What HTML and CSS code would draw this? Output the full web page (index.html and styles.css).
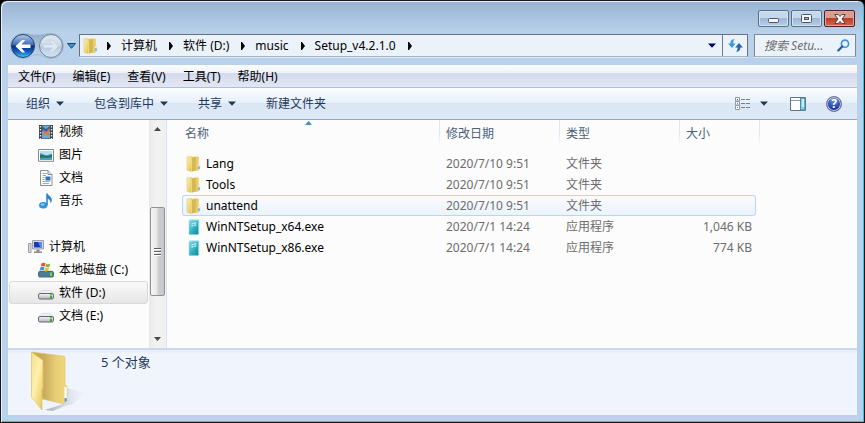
FILE: index.html
```html
<!DOCTYPE html>
<html lang="zh-CN">
<head>
<meta charset="utf-8">
<title>Setup_v4.2.1.0</title>
<link rel="stylesheet" href="styles.css">
</head>
<body>
<svg class="defs" aria-hidden="true">
  <defs>
    <linearGradient id="gFold" x1="0" x2="1" y1="0" y2="1">
      <stop offset="0" stop-color="#fbf0ae"/><stop offset=".5" stop-color="#f1dd80"/><stop offset="1" stop-color="#dfbc48"/>
    </linearGradient>
    <linearGradient id="gBack" x1="0" x2="1" y1="0" y2="0">
      <stop offset="0" stop-color="#f7e99c"/><stop offset=".45" stop-color="#d0ae48"/><stop offset="1" stop-color="#e9cd69"/>
    </linearGradient>
    <linearGradient id="gExe" x1="0" x2="1" y1="0" y2="1">
      <stop offset="0" stop-color="#7fdbe3"/><stop offset=".5" stop-color="#38b4c4"/><stop offset="1" stop-color="#0f8799"/>
    </linearGradient>
    <linearGradient id="gDrive" x1="0" x2="0" y1="0" y2="1">
      <stop offset="0" stop-color="#f6f6f8"/><stop offset="1" stop-color="#b4b6ba"/>
    </linearGradient>
    <symbol id="folder" viewBox="0 0 16 16">
      <path d="M5 1l7-.4.600.6v13.200L6 15z" fill="#e6ca68"/>
      <path d="M1 .8 5.600.600V14.800L5 15.400 1 14.200z" fill="url(#gFold)" stroke="#dcc26c" stroke-width=".5"/>
      <path d="M5 2.500 9 .600V14.500L6 15.800 5 15z" fill="url(#gBack)"/>
      <path d="M9 .8h3.300v13.400L9 14.500z" fill="#e9cd69"/>
      <path d="M9 1v13.500" stroke="#bf9c3a" stroke-width=".7"/>
      <path d="M12 8h1.800v5.200L12 13.800z" fill="#fdfdf6" stroke="#dfc66e" stroke-width=".4"/>
      <path d="M12.200 10.300h1.500v2.600h-1.500z" fill="#58aee8"/>
    </symbol>
    <symbol id="exe" viewBox="0 0 16 16">
      <path d="M3 1.500 4 .8h9v13.400l-.8 1.200H3z" fill="#9be6ec" stroke="#8ad3db" stroke-width=".5"/>
      <path d="M3.200 1.600h9v13.700h-9z" fill="url(#gExe)"/>
      <path d="M5.600 4.200l2-.6v1.500l-2 .5zM8.200 3.500l2.200-.4v1.500l-2.200.4zM5.400 6.300l2-.4v1.400l-2 .5zM8 5.700l2.200-.4v1.400L8 7.100z" fill="#c4f1f5"/>
    </symbol>
    <symbol id="drive" viewBox="0 0 16 16">
      <path d="M3 6.600 5 5.400h6l2.400 1.200 2.100 2.600H.5z" fill="#eef0f3" stroke="#c3c6cb" stroke-width=".5"/>
      <rect x=".5" y="8.500" width="15" height="5.500" rx="1.600" fill="url(#gDrive)" stroke="#62656b"/>
      <path d="M12 9.300h2v4h-2z" fill="#2f9a1e"/><path d="M12 9.800h2v1.500h-2z" fill="#7aea45"/>
    </symbol>
    <symbol id="down" viewBox="0 0 8 5"><path d="M0 .5h8L4 4.700z" fill="currentColor"/></symbol>
    <symbol id="right" viewBox="0 0 4 8"><path d="M0 0h1l3 4-3 4H0z" fill="currentColor"/></symbol>
  </defs>
</svg>

<div class="window">
  <header class="titlebar">
    <button class="cap" aria-label="最小化"><svg class="low" width="11" height="5" viewBox="0 0 11 5"><rect x=".5" y=".5" width="10" height="4" rx="1" fill="#f5f5f5" stroke="#4d5566"/></svg></button>
    <button class="cap" aria-label="最大化"><svg width="11" height="9" viewBox="0 0 11 9"><rect x=".5" y=".5" width="10" height="8" rx="1" fill="#f5f5f5" stroke="#4d5566"/><rect x="3.500" y="3.500" width="4" height="2" fill="#8fb0d4" stroke="#4d5566"/></svg></button>
    <button class="cap close" aria-label="关闭"><svg width="12" height="10" viewBox="0 0 12 10"><path d="M.8.500h3.400L6 2.500 7.800.500h3.400L8 5l3.200 4.500H7.800L6 7.500 4.200 9.500H.8L4 5z" fill="#f8f8f8" stroke="#5b3f4c"/></svg></button>
  </header>

  <div class="navbar">
    <div class="travel">
      <svg class="travel-art" width="58" height="28" viewBox="0 0 58 28" aria-hidden="true">
        <defs>
          <linearGradient id="gTravel" x1="0" x2="0" y1="0" y2="1"><stop offset="0" stop-color="#93adc9"/><stop offset="1" stop-color="#c4d8ed"/></linearGradient>
          <linearGradient id="gBlue" x1="0" x2="0" y1="0" y2="1"><stop offset="0" stop-color="#b3cdea"/><stop offset=".44" stop-color="#416cb8"/><stop offset=".5" stop-color="#092a85"/><stop offset=".75" stop-color="#135fbd"/><stop offset="1" stop-color="#42caf6"/></linearGradient>
          <linearGradient id="gGray" x1="0" x2="0" y1="0" y2="1"><stop offset="0" stop-color="#dfe9f3"/><stop offset=".48" stop-color="#cbd9e8"/><stop offset=".5" stop-color="#b6c9dd"/><stop offset="1" stop-color="#d5e4f2"/></linearGradient>
        </defs>
        <path d="M14 1.500c6 0 8 1.500 14 1.500s8-1.500 14-1.500a12.500 12.500 0 0 1 0 25c-6 0-9-4-14-4s-8 4-14 4a12.500 12.500 0 0 1 0-25z" fill="url(#gTravel)" stroke="#a3b9d1"/>
        <circle cx="14" cy="14" r="11.500" fill="url(#gBlue)" stroke="#27446f"/>
        <circle cx="42" cy="14" r="11.500" fill="url(#gGray)" stroke="#71839a"/>
        <path d="M6.500 14.200 13 8h3.200l-3.700 4.500H21.500v3.400h-9l3.700 4.500H13z" fill="#fff"/>
        <path d="M49.500 14.200 43 8h-3.200l3.700 4.500H34.500v3.400h9l-3.700 4.500H43z" fill="#dfe9f3" stroke="#c0cfdf" stroke-width=".7"/>
      </svg>
      <button class="hit" aria-label="返回"></button>
      <button class="hit" aria-label="前进" disabled></button>
    </div>
    <button class="recent" aria-label="最近的页面"><svg width="9" height="6" viewBox="0 0 9 6"><path d="M.5.500h8L4.500 5.300z" fill="#3d95cc" stroke="#1c4674"/></svg></button>
    <nav class="address" aria-label="地址">
      <svg class="crumb-icon" width="16" height="16"><use href="#folder"/></svg>
      <svg class="sep" width="4" height="8"><use href="#right"/></svg>
      <a href="#">计算机</a>
      <svg class="sep" width="4" height="8"><use href="#right"/></svg>
      <a href="#">软件 (D:)</a>
      <svg class="sep" width="4" height="8"><use href="#right"/></svg>
      <a href="#">music</a>
      <svg class="sep" width="4" height="8"><use href="#right"/></svg>
      <a href="#">Setup_v4.2.1.0</a>
      <svg class="sep" width="4" height="8"><use href="#right"/></svg>
      <button class="history" aria-label="以前的位置"><svg width="8" height="5"><use href="#down"/></svg></button>
      <button class="refresh" aria-label="刷新"><svg width="15" height="13" viewBox="0 0 15 13"><path d="M6.500 0C3.500.4 2.300 2 2.300 4.500H0L4 9l3.600-4.500H5.200C5.200 2.500 5.500 1.300 6.500 0z" fill="#3f97dc"/><path d="M8.200 13c3-.4 4.200-2 4.200-4.500H15L11 4 7.200 8.500h2.400c0 2-.4 3.200-1.400 4.500z" fill="#2965b0"/></svg></button>
    </nav>
    <form class="search">
      <input type="text" aria-label="搜索" placeholder="搜索 Setu...">
      <button type="button" aria-label="开始搜索"><svg width="13" height="13" viewBox="0 0 13 13"><circle cx="8" cy="4.700" r="3.600" fill="#e4f3fb" stroke="#3f93ce" stroke-width="1.600"/><path d="M5.200 7.500 1.300 11.500" stroke="#2a5b9c" stroke-width="2.300" stroke-linecap="round"/></svg></button>
    </form>
  </div>

  <main class="client">
    <div class="menubar">
      <button>文件(F)</button><button>编辑(E)</button><button>查看(V)</button><button>工具(T)</button><button>帮助(H)</button>
    </div>

    <div class="toolbar">
      <button>组织<svg width="8" height="5"><use href="#down"/></svg></button>
      <button>包含到库中<svg width="8" height="5"><use href="#down"/></svg></button>
      <button>共享<svg width="8" height="5"><use href="#down"/></svg></button>
      <button>新建文件夹</button>
      <div class="tools">
        <button aria-label="更改视图"><svg width="15" height="13" viewBox="0 0 15 13"><g fill="#fff" stroke="#8d99ab"><path d="M.5.500h4v3.500h-4zM.5 4.500h4V8h-4zM.5 8.500h4v4h-4z"/></g><path d="M2 2h1v1H2z" fill="#375a94"/><path d="M2 5.800h1v1H2z" fill="#c43131"/><path d="M2 10h1v1H2z" fill="#3d7a95"/><path d="M6 2.500h4m1 0h4M6 6.500h4m1 0h4M6 10.500h4m1 0h4" stroke="#6f7d92"/></svg></button>
        <button class="views" aria-label="更多选项"><svg width="8" height="5"><use href="#down"/></svg></button>
        <button class="preview" aria-label="显示预览窗格"><svg width="16" height="14" viewBox="0 0 16 14"><path d="M.5.500h15v13H.5z" fill="#fff" stroke="#5a7590"/><path d="M1 3.500h9" stroke="#8a9db1"/><path d="M10.500 1h4.500v12h-4.500z" fill="#7fd0e6" stroke="#4b8ba7"/><path d="M12 2h2v8h-2z" fill="#c5f0f8"/></svg></button>
        <button class="help" aria-label="获取帮助">?</button>
      </div>
    </div>

    <div class="body">
      <nav class="tree" aria-label="导航">
        <div class="tree-items">
          <a href="#"><svg width="16" height="16" viewBox="0 0 16 16"><path d="M1 1h14v14H1z" fill="#3e4248"/><path d="M4 1.500h8v13H4z" fill="#68acd9"/><path d="M4 2l4 3 4-3v5L8 9 4 7z" fill="#345f9c"/><path d="M5 5l3 3 4-4-1 5 1 4-4-3-4 3 2-4z" fill="#dc7952"/><path d="M2.500 2v13M13.500 2v13" stroke="#e4e9ed" stroke-width="1.400" stroke-dasharray="1.500 1.500"/></svg>视频</a>
          <a href="#"><svg width="16" height="16" viewBox="0 0 16 16"><path d="M.5 2.500h15v11.800H.5z" fill="#fff" stroke="#81898f"/><path d="M2 4h12v9H2z" fill="#4a9dd5"/><path d="M2 4h12v3L8 8.200 2 6z" fill="#b5dff3"/><path d="M2 8c3-1 5 1 7 1s3-1 5-2v3c-4 2-8 0-12 1z" fill="#29774d"/></svg>图片</a>
          <a href="#"><svg width="16" height="16" viewBox="0 0 16 16"><path d="M2.500.500H10L14 4.500v11H2.500z" fill="#fff" stroke="#8b8f96"/><path d="M10 .5v4h4" fill="#dde4ea" stroke="#8b8f96"/><path d="M4.500 3.500H9M4.500 5.500H8M4.500 7.500h2M4.500 9.500h2M4.500 11.500H12M4.500 13.500H11" stroke="#9baabd"/><path d="M7.500 6.500h5v4h-5z" fill="#2f74bd"/></svg>文档</a>
          <a href="#"><svg width="16" height="16" viewBox="0 0 16 16"><ellipse cx="5.200" cy="12.300" rx="4.100" ry="3.200" fill="#2e92de"/><ellipse cx="4.600" cy="11.500" rx="2" ry="1.200" fill="#78c6f5"/><path d="M8.200 12.500V.5h1.400c.6 2.500 4.800 3.300 4.200 7-.2 1.500-.9 2.200-1.600 2.800.6-2.300-.4-4-2.400-4.600v6.800z" fill="#2a88d3"/></svg>音乐</a>
          <a href="#" class="root"><svg width="16" height="16" viewBox="0 0 16 16"><path d="M.5 4.500h2.500v9H.5z" fill="#d9dcdf" stroke="#9ba1a7"/><path d="M4.500 1.500h11v8.500h-11z" fill="#d2d7dc" stroke="#9ca3ab"/><path d="M6 3h8v5.500H6z" fill="#153abd"/><path d="M10 3h4v5.500h-1.500z" fill="#5b88ea"/><path d="M8.500 10.500h3v2h2.500v1.500H6v-1.500h2.500z" fill="#878e97"/></svg>计算机</a>
          <a href="#"><svg width="16" height="16" viewBox="0 0 16 16"><path d="M2 8h12l1.500 2H.5z" fill="#d7e4ed"/><rect x=".5" y="9.500" width="15" height="5.500" rx="1.300" fill="#4a7e96" stroke="#506675"/><path d="M12 10.500h2V14h-2z" fill="#69df3d"/><path d="M3.500 1.500c1.500-1 2.500-1 4-.2L6.700 4.500c-1.500-.8-2.600-.7-4 .1z" fill="#e3532a"/><path d="M8.200 1.700c1.500.8 2.500.7 4.100-.2l-.9 3.300c-1.500.8-2.600.7-4 0z" fill="#79b940"/><path d="M2.500 5.300c1.400-.8 2.500-.8 4 0l-.9 3.300c-1.500-.8-2.500-.7-4 .1z" fill="#3e91d4"/><path d="M7.200 5.600c1.500.8 2.500.7 4 0l-.9 3.200c-1.500.8-2.500.8-4 .1z" fill="#f5b92c"/></svg>本地磁盘 (C:)</a>
          <a href="#" class="selected"><svg width="16" height="16"><use href="#drive"/></svg>软件 (D:)</a>
          <a href="#"><svg width="16" height="16"><use href="#drive"/></svg>文档 (E:)</a>
        </div>
        <div class="scrollbar" aria-hidden="true">
          <svg width="7" height="4" viewBox="0 0 7 4"><path d="M0 4 3.500 0 7 4z" fill="#484848"/></svg>
          <div class="thumb"><i></i><i></i><i></i></div>
          <svg class="end" width="7" height="4" viewBox="0 0 7 4"><path d="M0 0h7L3.500 4z" fill="#484848"/></svg>
        </div>
      </nav>

      <section class="files">
        <table>
          <colgroup><col class="c-name"><col class="c-mid"><col class="c-mid"><col class="c-size"><col class="c-end"></colgroup>
          <thead>
            <tr><th scope="col">名称<svg class="sort" width="7" height="4" viewBox="0 0 7 4"><path d="M0 4 3.500 0 7 4z" fill="#4d8ba8"/></svg></th><th scope="col">修改日期</th><th scope="col">类型</th><th scope="col">大小</th><td></td></tr>
          </thead>
          <tbody>
            <tr><td><svg width="16" height="16"><use href="#folder"/></svg>Lang</td><td>2020/7/10 9:51</td><td>文件夹</td><td></td></tr>
            <tr><td><svg width="16" height="16"><use href="#folder"/></svg>Tools</td><td>2020/7/10 9:51</td><td>文件夹</td><td></td></tr>
            <tr class="hot"><td><svg width="16" height="16"><use href="#folder"/></svg>unattend</td><td>2020/7/10 9:51</td><td>文件夹</td><td></td></tr>
            <tr><td><svg width="16" height="16"><use href="#exe"/></svg>WinNTSetup_x64.exe</td><td>2020/7/1 14:24</td><td>应用程序</td><td>1,046 KB</td></tr>
            <tr><td><svg width="16" height="16"><use href="#exe"/></svg>WinNTSetup_x86.exe</td><td>2020/7/1 14:24</td><td>应用程序</td><td>774 KB</td></tr>
          </tbody>
        </table>
      </section>
    </div>

    <footer class="details">
      <svg width="56" height="62" viewBox="0 0 56 62" aria-hidden="true">
        <defs>
          <linearGradient id="gShade" x1="0" x2="1" y1="0" y2="0"><stop offset="0" stop-color="#8f97a5" stop-opacity=".8"/><stop offset="1" stop-color="#c8cedb" stop-opacity="0"/></linearGradient>
          <linearGradient id="gRear" x1="0" x2="1" y1="0" y2="0"><stop offset="0" stop-color="#c8a94f"/><stop offset=".35" stop-color="#c9ad5c"/><stop offset=".7" stop-color="#e8cf78"/><stop offset="1" stop-color="#f0d977"/></linearGradient>
          <linearGradient id="gFront" x1="0" x2="1" y1="0" y2="1"><stop offset="0" stop-color="#f3e08f"/><stop offset=".45" stop-color="#fff0ac"/><stop offset="1" stop-color="#e4c350"/></linearGradient>
        </defs>
        <path d="M37 37 55 42 43 53 35 55zM15 59l18-6 4 1-14 6z" fill="url(#gShade)"/>
        <path d="M2 1 33 5l2 1v28l2 1v15l-3 3L12 48z" fill="url(#gRear)" stroke="#dcc26a" stroke-width=".6"/>
        <path d="M34.500 36h2.200v13.500l-2.200 1z" fill="#fff"/><path d="M34.500 47h2.200v3l-2.200 1z" fill="#4e9ce8"/>
        <path d="M1.500 1 13 9.500V37l-1 2v20L1.500 46z" fill="url(#gFront)" stroke="#ddc466" stroke-width=".7"/>
      </svg>
      <p>5 个对象</p>
    </footer>
  </main>
</div>
</body>
</html>
```
FILE: styles.css
```css
* { box-sizing: border-box; }

body {
  margin: 0;
  background: #000;
  color: #000;
  font: 12px/16px "Noto Sans", "Noto Sans CJK SC", sans-serif;
}

.defs { position: absolute; width: 0; height: 0; }

svg { display: block; flex: none; }

button {
  display: flex;
  align-items: center;
  justify-content: center;
  margin: 0;
  padding: 0;
  border: 0;
  background: none;
  color: inherit;
  font: inherit;
}

a { color: inherit; text-decoration: none; }

.window {
  display: flex;
  flex-direction: column;
  min-height: 100vh;
  padding: 0 7px 7px 6px;
  border: 1px solid #16181c;
  border-radius: 7px 7px 0 0;
  background: linear-gradient(#98b4d2, #b9d1ea 32px, #b9d1ea);
  box-shadow: inset 1px 1px #e8f2fb, inset -1px -1px #32c3de;
}

/* title bar */
.titlebar {
  display: flex;
  justify-content: flex-end;
  gap: 2px;
  height: 32px;
  padding: 9px 2px 0 0;
}

.cap {
  width: 31px;
  height: 17px;
  border: 1px solid #586f8c;
  border-radius: 2px;
  background: linear-gradient(#c6d8eb 45%, #9cb8d6 50%, #b5cfe8);
  box-shadow: inset 0 0 0 1px #d4e3f2;
}

.cap .low { margin-top: 4px; }

.cap.close {
  border-color: #521c24;
  background: linear-gradient(#dc9c90 45%, #b83f27 50%, #d0684d);
  box-shadow: inset 0 0 0 1px #e0a69b;
}

/* navigation row */
.navbar {
  display: flex;
  align-items: flex-start;
  height: 32px;
  padding: 1px 1px 0 2px;
}

.travel { position: relative; display: flex; width: 58px; height: 28px; margin-top: -2px; }
.travel-art { position: absolute; inset: 0; }
.hit { position: relative; flex: 1; border-radius: 50%; }

.recent { width: 9px; height: 24px; margin-right: 3px; }

.address {
  display: flex;
  flex: 1;
  align-items: center;
  height: 23px;
  border: 1px solid #65717f;
  border-bottom-color: #a6b3c2;
  background: #ebf2fa;
  box-shadow: 0 1px #dbe8f6;
}

.crumb-icon { margin: 0 8px 0 3px; }
.sep { margin-right: 10px; }
.address a { margin-right: 12px; }
.history { width: 20px; height: 21px; margin-left: auto; color: #000060; }

.refresh {
  width: 25px;
  height: 21px;
  border-left: 1px solid #6f7987;
}

.search {
  display: flex;
  align-items: center;
  width: 102px;
  height: 23px;
  margin: 0 0 0 6px;
  padding-right: 5px;
  border: 1px solid #7d8896;
  border-bottom-color: #a6b3c2;
  background: #ebf2fa;
  box-shadow: 0 1px #dbe8f6;
}

.search input {
  flex: 1;
  min-width: 0;
  padding: 0 0 0 9px;
  border: 0;
  outline: 0;
  background: none;
  font: italic 12px/16px "Noto Sans", "Noto Sans CJK SC", sans-serif;
}

.search input::placeholder { color: #6d6d6d; opacity: 1; }

/* client area */
.client {
  display: flex;
  flex: 1;
  flex-direction: column;
  margin-left: 1px;
  background: #fcfcfc;
}

.menubar {
  display: flex;
  gap: 17px;
  height: 23px;
  padding: 1px 0 0 10px;
  border-bottom: 1px solid #b6bccc;
  background: linear-gradient(#fff, #eef1f8 8px, #d5daec 8px, #e2e7f4);
}

.toolbar {
  display: flex;
  align-items: center;
  gap: 30px;
  height: 32px;
  padding: 0 15px 0 18px;
  border-bottom: 1px solid #94a6c0;
  background: linear-gradient(#fafdff, #e6f0fa 15px, #dce6f4 15px, #dde9f7);
  color: #1e395b;
}

.toolbar button { gap: 6px; }
.tools { display: flex; align-items: center; margin-left: auto; }
.tools .views { margin-left: 10px; }
.tools .preview { margin-left: 22px; }

.tools .help {
  width: 16px;
  height: 16px;
  margin-left: 20px;
  border: 1px solid #6c7382;
  border-radius: 50%;
  background: radial-gradient(circle at 50% 25%, #7797e6, #1a3aab 65%);
  box-shadow: inset 0 0 0 1px #c5cbd8;
  color: #fff;
  font-weight: 700;
}

.body { display: flex; flex: 1; }

/* navigation tree */
.tree {
  display: flex;
  width: 159px;
  border-right: 1px solid #d6e5f5;
}

.tree-items { flex: 1; padding: 0 1px; }

.tree a {
  display: flex;
  align-items: center;
  gap: 5px;
  height: 23px;
  padding-left: 28px;
  border: 1px solid transparent;
  border-radius: 3px;
}

.tree .root { margin-top: 23px; padding-left: 18px; }

.tree .selected {
  border-color: #d9d9d9;
  background: linear-gradient(#fafafa, #e6e6e6);
}

.scrollbar {
  display: flex;
  flex-direction: column;
  align-items: center;
  width: 17px;
  padding: 7px 1px 7px 0;
  background: linear-gradient(90deg, #e8e8e8, #f2f2f2 6px, #f0f0f0);
}

.scrollbar .end { margin-top: auto; }

.thumb {
  display: flex;
  flex-direction: column;
  align-items: center;
  justify-content: center;
  gap: 1px;
  width: 15px;
  height: 89px;
  margin-top: 76px;
  border: 1px solid #929292;
  border-radius: 2px;
  background: linear-gradient(90deg, #f6f6f6, #e8e8e9 45%, #cfcfd3 55%, #c6c6ca);
}

.thumb i { width: 7px; height: 2px; border-bottom: 1px solid #fff; background: #5c5c5c; }

/* file list */
.files { flex: 1; padding-left: 15px; }

table { table-layout: fixed; width: 578px; border-spacing: 0; }
.c-name { width: 258px; }
.c-mid { width: 120px; }
.c-size { width: 76px; }
.c-end { width: 4px; }

thead th, thead td {
  position: relative;
  height: 33px;
  padding: 0 6px 5px;
  border-right: 1px solid;
  border-image: linear-gradient(#dce7f3 12px, transparent 26px) 1;
  color: #4c607a;
  font-weight: 400;
  text-align: left;
}

thead th:first-child { padding-left: 3px; }
thead td { padding: 0; }
thead th:nth-child(4) { border: 0; }
.sort { position: absolute; top: 1px; left: 123px; }

tbody td {
  height: 21px;
  padding: 0 6px;
  border: solid transparent;
  border-width: 1px 0;
  color: #6d6d6d;
}

tbody td:first-child { padding-left: 4px; color: #000; }
tbody td:nth-child(4) { padding: 0 4px; text-align: right; }
tbody svg { float: left; margin-right: 4px; }

.hot td {
  border-color: #b8d6fb;
  background: linear-gradient(#fafbfd, #ebf3fd) padding-box;
}

.hot td:first-child { padding-left: 3px; border-left: 1px solid #b8d6fb; border-radius: 3px 0 0 3px; }
.hot td:last-child { border-right: 1px solid #b8d6fb; border-radius: 0 3px 3px 0; }

/* details pane */
.details {
  display: flex;
  gap: 15px;
  height: 67px;
  padding: 1px 0 0 22px;
  border-top: 2px solid #cbd8ea;
  background: linear-gradient(#e4ecf7, #f0f4fc 4px);
  color: #1e395b;
  font-size: 13px;
}

.details p { margin: 3px 0 0; }
```
